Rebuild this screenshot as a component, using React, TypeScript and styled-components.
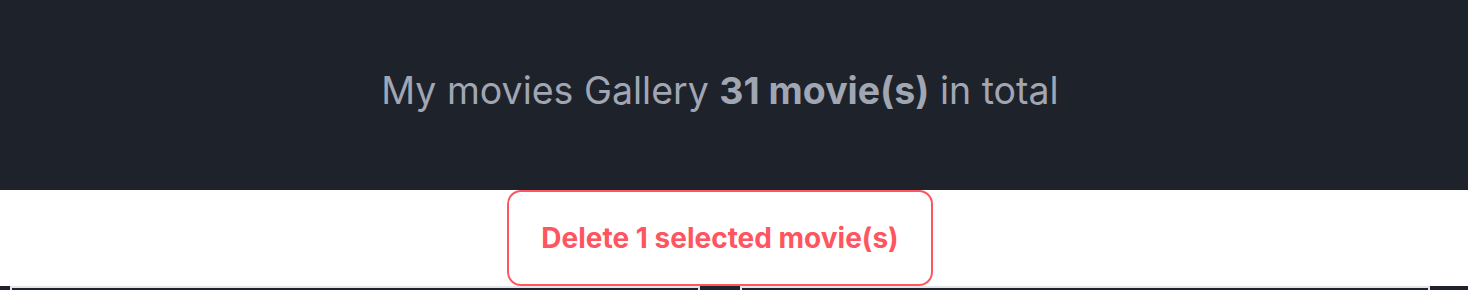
import React from "react";
import styled, { createGlobalStyle } from "styled-components";

const Global = createGlobalStyle`
  html, body { margin: 0; padding: 0; background: #ffffff; }
  body { font-family: Inter, "Noto Sans", Arial, sans-serif; overflow: hidden; }
`;

const Header = styled.header`
  height: 190px;
  background: #1e222b;
  display: flex;
  align-items: center;
  justify-content: center;
  padding-right: 28px;
`;

const Title = styled.h1`
  margin: 0;
  font-size: 37.5px;
  line-height: 40px;
  font-weight: 400;
  color: #a1a6b3;
  transform: translateY(-4px);
  strong { font-weight: 700; }
`;

const Actions = styled.div`
  display: flex;
  justify-content: center;
  padding-right: 28px;
`;

const DeleteButton = styled.button`
  font-family: inherit;
  font-size: 28px;
  line-height: 32px;
  font-weight: 700;
  color: #ff5560;
  background: #ffffff;
  border: 2px solid #ff5560;
  border-radius: 14px;
  padding: 30px 32px;
  cursor: pointer;
`;

const Gallery = styled.div`
  display: grid;
  grid-template-columns: 10px 686px 40px 686px 1fr;
  column-gap: 2px;
  background: #e3e4e8;
  height: 4px;
  overflow: hidden;
`;

const Card = styled.div<{ $inset?: boolean }>`
  background: #1e222b;
  margin-top: ${(p) => (p.$inset ? "2px" : "0")};
`;

export default function App() {
  return (
    <>
      <Global />
      <Header>
        <Title>
          My movies Gallery <strong>31 movie(s)</strong> in total
        </Title>
      </Header>
      <Actions>
        <DeleteButton>Delete 1 selected movie(s)</DeleteButton>
      </Actions>
      <Gallery>
        <Card />
        <Card $inset />
        <Card />
        <Card $inset />
        <Card />
      </Gallery>
    </>
  );
}
